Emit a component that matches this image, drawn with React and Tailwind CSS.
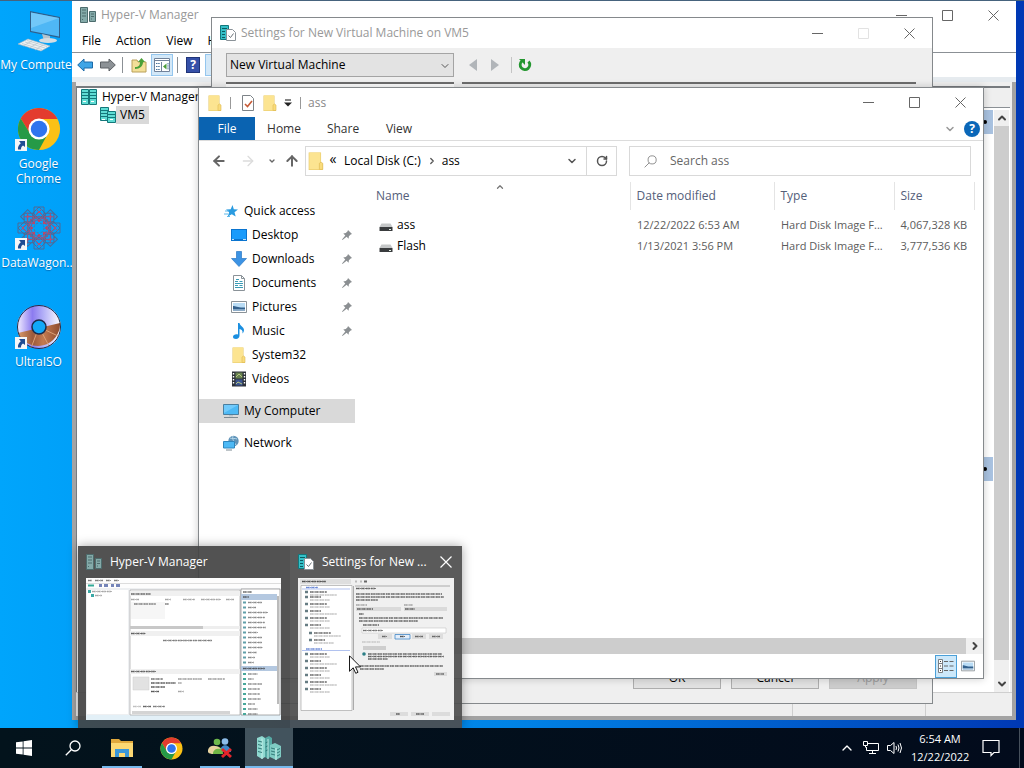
import { ArrowLeft, ArrowRight, ArrowUp, ChevronDown, ChevronRight, ChevronUp, RotateCw } from "lucide-react";

const quickAccess = [
  { label: "Desktop", icon: DesktopIcon, pinned: true },
  { label: "Downloads", icon: DownloadIcon, pinned: true },
  { label: "Documents", icon: DocumentIcon, pinned: true },
  { label: "Pictures", icon: PictureIcon, pinned: true },
  { label: "Music", icon: MusicIcon, pinned: true },
  { label: "System32", icon: FolderIcon },
  { label: "Videos", icon: VideoIcon },
];

const files = [
  { name: "ass", date: "12/22/2022 6:53 AM", type: "Hard Disk Image F...", size: "4,067,328 KB" },
  { name: "Flash", date: "1/13/2021 3:56 PM", type: "Hard Disk Image F...", size: "3,777,536 KB" },
];

/* ---------- Icons ---------- */

function FolderIcon({ className = "w-4 h-4" }) {
  return (
    <svg viewBox="0 0 16 16" className={className}>
      <path d="M1.500 .5h11v9l1.500 1v5.500H1.500z" fill="#e6c766" />
      <path d="M2 .5h10v15H2z" fill="#fce491" />
      <path d="M11 10l1.500-1 1.500 1v5.500h-3z" fill="#f9dc7c" stroke="#dfba53" strokeWidth=".6" />
    </svg>
  );
}

function SearchIcon({ className, strokeWidth = 1 }) {
  return (
    <svg viewBox="0 0 16 16" className={className} fill="none" stroke="currentColor" strokeWidth={strokeWidth}>
      <circle cx="10" cy="6" r="5" />
      <path d="M6.500 9.500L.8 15.200" />
    </svg>
  );
}

function StarIcon() {
  return (
    <svg viewBox="0 0 16 16" className="w-4 h-4">
      <path d="M9.500 2l1.300 4.200 4.200.3-3.500 2.700 1.200 4.300-3.900-2.300-4 2.300 1.300-4.300L3 6.500l4.700-.3z" fill="#2a9be0" />
      <path d="M2 8h4M1 11h4M4 13.500h3" stroke="#5db9ec" strokeWidth="1" />
    </svg>
  );
}

function DesktopIcon() {
  return (
    <svg viewBox="0 0 16 16" className="w-4 h-4">
      <path d="M0 2h16v12H0z" fill="#0a74cf" />
      <path d="M1 3h14v9H1z" fill="#1a9bfb" />
      <path d="M1 12.500h2M12 12.500h3" stroke="#bfe3ff" strokeWidth="1" />
    </svg>
  );
}

function DownloadIcon() {
  return (
    <svg viewBox="0 0 16 16" className="w-4 h-4">
      <path d="M5.500 .5h5v7H15.500L8 15.500.5 7.500h5z" fill="#3c93e4" stroke="#2a77c4" strokeWidth=".7" />
    </svg>
  );
}

function DocumentIcon() {
  return (
    <svg viewBox="0 0 16 16" className="w-4 h-4">
      <path d="M2.500 .5h8l3 3v12h-11z" fill="#fff" stroke="#8a9298" />
      <path d="M10.500 .5v3h3" fill="none" stroke="#8a9298" />
      <path d="M5 4.500h3M4 6.500h3M8.500 6.500h3M4 8.500h8M4 10.500h3M8.500 10.500h3M4 12.500h8" stroke="#3b9bb5" />
    </svg>
  );
}

function PictureIcon({ className = "w-4 h-4" }) {
  return (
    <svg viewBox="0 0 16 16" className={className}>
      <path d="M.5 2.500h15v11H.5z" fill="#fff" stroke="#8a9298" />
      <path d="M2 4h12v8H2z" fill="#b9dcf5" />
      <path d="M2 7c3 0 5 2 12 1.500v2H2z" fill="#33618d" />
      <path d="M2 10.500h12V12H2z" fill="#8fadc8" />
    </svg>
  );
}

function MusicIcon() {
  return (
    <svg viewBox="0 0 16 16" className="w-4 h-4">
      <path d="M7 0h1.500c.5 3 4.500 4 4.500 7 0 2-1 3-1.500 3.500.5-3-1-4-3-4.500v6.500C8.500 14.500 7 16 5 16s-3-1-3-2.300C2 12 4.500 10.800 7 11.500z" fill="#1b8fe0" />
    </svg>
  );
}

function VideoIcon() {
  return (
    <svg viewBox="0 0 16 16" className="w-4 h-4">
      <path d="M1 .5h14v15H1z" fill="#2d3138" />
      <path d="M4.500 1.500h7v6h-7z" fill="#66804f" />
      <path d="M4.500 8.500h7v6h-7z" fill="#3d5590" />
      <path d="M5 6l3-3 3 3M5 13l2-2 4 2" stroke="#b6c67f" fill="none" />
      <path d="M2.500 2v12M13.500 2v12" stroke="#fff" strokeWidth="1.400" strokeDasharray="1.500 1.500" />
    </svg>
  );
}

function ComputerIcon() {
  return (
    <svg viewBox="0 0 16 16" className="w-4 h-4">
      <path d="M.5 1.500h15v10H.5z" fill="#4db9f5" stroke="#4b7f9f" />
      <path d="M1 2h14L1 10z" fill="#8ad6ff" opacity=".6" />
      <path d="M6 12h4v1.500H6z" fill="#b9c4cb" />
      <path d="M1 14.500h14" stroke="#7d8a92" />
    </svg>
  );
}

function NetworkIcon() {
  return (
    <svg viewBox="0 0 16 16" className="w-4 h-4">
      <circle cx="10.500" cy="6" r="5.200" fill="#5f93b8" />
      <path d="M7 3c2 1 5 0 7 1M10 1c-1 3 1 6 3 9" stroke="#b6d8ec" fill="none" />
      <path d="M.5 6.500h11v6.500H.5z" fill="#4db9f5" stroke="#2f86bd" />
      <path d="M3 15h6" stroke="#7d8a92" />
    </svg>
  );
}

function PinIcon() {
  return (
    <svg viewBox="0 0 12 12" className="w-3 h-3">
      <path d="M7 1l4 4-1.300.4L7.900 7.200l-.3 2.500-2-2L1.500 11 1 10.500l3.300-4.100-2-2 2.500-.3L6.600 2.300z" fill="#8b8f92" />
    </svg>
  );
}

function DriveIcon() {
  return (
    <svg viewBox="0 0 14 16" className="w-3.5 h-4">
      <path d="M2.500 6.500h9l2 3.500H.5z" fill="#c5c7c8" />
      <path d="M.5 10h13v4H.5z" fill="#3a3c3e" />
      <path d="M10 12.500h2" stroke="#e7f4ea" />
    </svg>
  );
}

// a tall rack beside a short one
function ServerIcon({ className = "w-4 h-4", muted }) {
  const fill = muted ? "#84aaa9" : "#5fd3cc";
  const line = muted ? "#4d6c6d" : "#14777a";
  return (
    <svg viewBox="0 0 16 16" className={className}>
      <path d="M.5 .5h7v15h-7z" fill={fill} stroke={line} />
      <path d="M2 3h4M2 6h4M2 9h4M2 12.500h1" stroke={line} />
      <path d="M9.500 4.500h6v10h-6z" fill={fill} stroke={line} />
      <path d="M11 7h3M11 9.500h3M11 12h1" stroke={line} />
    </svg>
  );
}

function RackIcon({ paired }) {
  return (
    <svg viewBox="0 0 16 16" className="w-4 h-4">
      <path d={paired ? "M.5 .5h8v13h-8z" : "M.5 .5h7v15h-7z"} fill="#5fdcd4" stroke="#14777a" />
      <path d={paired ? "M7.500 4.500h8v11h-8z" : "M8.500 .5h7v15h-7z"} fill="#5fdcd4" stroke="#14777a" />
      <path d={paired ? "M1 3.500h7M1 6.500h6M8 7.500h7M8 10.500h7M1 9.500h6" : "M1 3.500h14M1 6.500h14M1 9.500h14"} stroke="#14777a" />
      <path d="M2 12.500h3M10 12.500h3" stroke="#fff" />
    </svg>
  );
}

function ServerClusterIcon() {
  return (
    <svg viewBox="0 0 24 24" className="w-6 h-6">
      <path d="M0 2l5-2 3 2v19l-3 2-5-3z" fill="#8fd8d0" />
      <path d="M8 2l4-2 3 2v17l-4 4-3-2z" fill="#55a9a4" />
      <path d="M5 2.500V23M11 3v20" stroke="#c5f0ea" />
      <path d="M13 9l5-2 6 3v11l-5 3-6-3z" fill="#7fcbc3" />
      <path d="M19 12v12" stroke="#d2f5f0" />
      <path d="M1 5l4 1M1 8.500l4 1M1 12l4 1M1 15.500l4 1M14 12l4 1M14 15l4 1M14 18l4 1M20 14l3-1.500M20 17l3-1.500M20 20l3-1.500M8.500 7l2-1M8.500 11l2-1M8.500 15l2-1" stroke="#357c7a" />
    </svg>
  );
}

function ServerSettingsIcon() {
  return (
    <svg viewBox="0 0 16 16" className="w-4 h-4">
      <path d="M.5 .5h8v14h-8z" fill="#35c0c8" stroke="#12787c" />
      <path d="M2 3.500h5M2 6.500h3M2 9.500h3M2 12.500h3" stroke="#0c5c60" />
      <path d="M6.500 4.500h6l3 3v8h-9z" fill="#fff" stroke="#8a9298" />
      <path d="M8.500 10.500l2 2 3-4" fill="none" stroke="#6a7278" />
    </svg>
  );
}

function ChromeIcon({ className }) {
  return (
    <svg viewBox="0 0 48 48" className={className}>
      <circle cx="24" cy="24" r="23" fill="#fbc116" />
      <path d="M4.100 12.500a23 23 0 0 1 39.800 0L44 13H24a11 11 0 0 0-9.500 16.500z" fill="#e33b2e" />
      <path d="M4.100 12.500A23 23 0 0 0 24 47l9.500-17.500A11 11 0 0 1 14.500 29.500z" fill="#269a47" />
      <circle cx="24" cy="24" r="11.500" fill="#fff" />
      <circle cx="24" cy="24" r="9" fill="#2f74ee" />
    </svg>
  );
}

function BigComputerIcon() {
  return (
    <svg viewBox="0 0 44 44" className="w-11 h-11">
      <path d="M13 3l30 6v21l-30-6z" fill="#2e5f8b" />
      <path d="M14 4.500l28 5.500v18.500L14 23z" fill="#4fb7f5" />
      <path d="M14 4.500l28 5.500L14 20z" fill="#8bd4fb" opacity=".6" />
      <path d="M25 26l8 2v4l-6 1z" fill="#b6c3cd" />
      <ellipse cx="31" cy="32.500" rx="9" ry="2.600" fill="#d5dde3" />
      <path d="M1 36l10-5 22 7-9 5z" fill="#eef1f3" stroke="#a9b6c0" strokeWidth=".6" />
      <path d="M5 35.500l20 6M8 34l20 6M10 32.500l20 6M6 38l9-5M12 40l9-5M18 42l8-5" stroke="#b7c4cd" strokeWidth=".7" />
    </svg>
  );
}

function DataWagonIcon() {
  return (
    <svg viewBox="0 0 44 44" className="w-11 h-11" fill="none">
      {[0, 45, 90, 135, 180, 225, 270, 315].map((angle) => (
        <g key={angle} transform={`rotate(${angle} 22 22)`}>
          <path d="M22 1l6 6-6 6-6-6zM17 1h10v10H17z" stroke="#4c6a98" />
          <path d="M22 5l4 5-4 6-4-6zM16 14l6-4 6 4M19 3l6 6M25 3l-6 6" stroke="#94567f" />
          <circle cx="22" cy="14.500" r="1.200" fill="#d1405f" />
          <circle cx="22" cy="6" r="1" fill="#c94a6a" />
        </g>
      ))}
      <circle cx="22" cy="22" r="8" stroke="#a04d70" strokeDasharray="2 1" />
      <circle cx="22" cy="22" r="5" stroke="#5a7099" strokeDasharray="2 2" />
    </svg>
  );
}

function DiscIcon() {
  return (
    <svg viewBox="0 0 44 44" className="w-11 h-11">
      <defs>
        <linearGradient id="discTop">
          <stop offset="0" stopColor="#f4f0ff" />
          <stop offset=".35" stopColor="#8c7bf0" />
          <stop offset=".6" stopColor="#b3b0f7" />
          <stop offset="1" stopColor="#fff" />
        </linearGradient>
        <linearGradient id="discBottom">
          <stop offset="0" stopColor="#d99a6a" />
          <stop offset=".35" stopColor="#9b5a3c" />
          <stop offset=".6" stopColor="#c47a50" />
          <stop offset="1" stopColor="#8e4c30" />
        </linearGradient>
      </defs>
      <circle cx="22" cy="22" r="22" fill="url(#discTop)" />
      <path d="M1 28l42-10a22 22 0 0 1-42 10z" fill="url(#discBottom)" />
      <path d="M22 22L14 43M22 22l10 19M22 22l19 9" stroke="#dba077" />
      <circle cx="22" cy="22" r="21.500" fill="none" stroke="#1d2b4a" />
      <circle cx="22" cy="22" r="7" fill="#12a8f8" stroke="#1d2b4a" strokeWidth="1.500" />
    </svg>
  );
}

function ShortcutArrow() {
  return (
    <svg viewBox="0 0 12 12" className="absolute -left-0.5 bottom-0 w-3 h-3">
      <path d="M0 0h12v12H0z" fill="#f4f6f8" />
      <path d="M4 2h6v6L8 6.500C6 8 6 9 6 10.500H3C2.500 8 4 5.500 5.800 4.200z" fill="#1f4c93" />
    </svg>
  );
}

/* ---------- Shared window chrome ---------- */

function WindowControls({ maxDisabled }) {
  return (
    <div className="ml-auto flex h-full text-[#666]">
      <button aria-label="Minimize" className="w-[46px] flex items-center justify-center">
        <svg viewBox="0 0 11 11" className="w-[11px] h-[11px]"><path d="M0 5.500h11" stroke="currentColor" /></svg>
      </button>
      <button aria-label="Maximize" disabled={maxDisabled} className="w-[46px] flex items-center justify-center disabled:text-[#e2e2e2]">
        <svg viewBox="0 0 11 11" className="w-[11px] h-[11px]"><path d="M.5 .5h10v10H.5z" fill="none" stroke="currentColor" /></svg>
      </button>
      <button aria-label="Close" className="w-[46px] flex items-center justify-center">
        <svg viewBox="0 0 11 11" className="w-[11px] h-[11px]"><path d="M.5 .5l10 10M10.500 .5l-10 10" stroke="currentColor" /></svg>
      </button>
    </div>
  );
}

function DesktopShortcut({ label, icon, shortcut = true }) {
  return (
    <a href="#" className="flex flex-col items-center h-[99px] gap-[5px] text-white text-center leading-[15px]">
      <span className="relative shrink-0">
        {icon}
        {shortcut && <ShortcutArrow />}
      </span>
      <span className="[text-shadow:0_1px_1px_rgba(0,60,120,0.5)]">{label}</span>
    </a>
  );
}

/* ---------- Hyper-V Manager ---------- */

function HyperVWindow() {
  return (
    <section className="absolute left-[72px] right-2 top-px bottom-12 flex flex-col bg-white">
      <header className="flex items-center h-7 pl-2 gap-[5px] text-[#999]">
        <ServerIcon muted />
        <span>Hyper-V Manager</span>
        <WindowControls />
      </header>
      <nav className="flex items-center gap-[15px] h-6 pl-[10px] border-b border-[#8b9095]">
        <button>File</button>
        <button>Action</button>
        <button>View</button>
        <button>Help</button>
      </nav>
      <div className="flex items-center h-6 pl-[5px]">
        <button aria-label="Back" className="w-4 mr-[7px]">
          <svg viewBox="0 0 16 14" className="w-4"><path d="M7 1v3h8.500v6H7v3L.7 7z" fill="#3fa5e6" stroke="#1c6aa8" /></svg>
        </button>
        <button aria-label="Forward" className="w-4 mr-[6px]">
          <svg viewBox="0 0 16 14" className="w-4"><path d="M9 1v3H.5v6H9v3l6.300-6z" fill="#8d9296" stroke="#5c6064" /></svg>
        </button>
        <span className="w-px h-4 bg-[#8b9095] mr-2" />
        <button aria-label="Up one level" className="w-4 mr-1">
          <svg viewBox="0 0 16 16" className="w-4">
            <path d="M1 3h5l1 2h8v10H1z" fill="#f3df98" stroke="#b9a05a" />
            <path d="M4 10c4 0 5-2 5-5H7l3.500-4L14 5h-2c0 4-3 7-8 7z" fill="#49a038" />
          </svg>
        </button>
        <button aria-label="Show tree" className="w-[22px] h-[22px] flex items-center justify-center bg-[#d3e8f8] border border-[#94c6ee] mr-1">
          <svg viewBox="0 0 16 14" className="w-4">
            <path d="M.5 .5h15v13H.5z" fill="#fff" stroke="#71829a" />
            <path d="M1 2.500h14M7.500 4v10" stroke="#71829a" />
            <path d="M2 5.500h4M2 8.500h4M2 11.500h4M14 5v7" stroke="#46729c" strokeDasharray="1.500 .7" />
            <path d="M12.500 5.500v6L9 8.500z" fill="#4a9c38" />
          </svg>
        </button>
        <span className="w-px h-4 bg-[#8b9095] mr-2" />
        <button aria-label="Help" className="w-[14px] h-4 bg-[#3550a8] border border-[#1f3479] text-white font-bold leading-3 mr-[5px]">?</button>
        <button aria-label="Show actions" className="w-[22px] h-[22px] bg-[#d3e8f8] border border-[#94c6ee]" />
      </div>
      <div className="h-[5px] bg-[#e6ebef]" />
      <div className="flex-1 flex min-h-0 bg-[#efefef] border-x-4 border-b-4 border-[#a3a3a3] flex-col">
        <div className="flex-1 flex min-h-0 mt-1 mr-0.5 border-t-2 border-l border-[#777b7f]">
          <div className="flex-1 bg-white">
            <div className="flex items-center gap-[5px] h-[18px] pl-1">
              <RackIcon />
              <span>Hyper-V Manager</span>
            </div>
            <div className="flex items-center h-[18px] pl-[23px]">
              <RackIcon paired />
              <span className="bg-[#d9d9d9] h-[18px] px-1 leading-[17px]">VM5</span>
            </div>
          </div>
          <div className="w-8 flex flex-col bg-white">
            <div className="h-5 bg-[#efefef] border-b border-[#8b9095]" />
            <div className="flex-1 flex min-h-0 pt-[2px]">
              <div className="flex-1 flex flex-col gap-[323px]">
                <span className="h-6 bg-[#a9c2e0] flex items-center"><span className="ml-[5px] w-1 h-1 bg-black rounded-full" /></span>
                <span className="h-6 bg-[#a9c2e0] flex items-center"><span className="ml-[5px] w-1 h-1 bg-black rounded-full" /></span>
              </div>
              <div className="w-[15px] ml-px mr-px flex flex-col items-center bg-[#efefef]">
                <ChevronUp className="w-3 h-4 shrink-0 text-[#444]" strokeWidth={4} />
                <span className="flex-1 w-full bg-[#cdcdcd]" />
                <span className="h-8 flex items-end"><ChevronDown className="w-3 h-4 text-[#444]" strokeWidth={4} /></span>
              </div>
            </div>
          </div>
        </div>
        <footer className="flex h-6 border-t border-[#cfcfcf]">
          <span className="flex-1" />
          <span className="w-[133px] border-l border-[#cfcfcf]" />
          <span className="w-[87px] border-l border-[#cfcfcf]" />
        </footer>
      </div>
    </section>
  );
}

/* ---------- VM settings dialog ---------- */

function SettingsWindow() {
  return (
    <section className="absolute left-[211px] right-[91px] top-[17px] bottom-16 flex flex-col bg-[#efefef] border border-[#85898c]">
      <header className="flex items-center h-[30px] pl-2 gap-[5px] bg-white text-[#999]">
        <ServerSettingsIcon />
        <span>Settings for New Virtual Machine on VM5</span>
        <WindowControls maxDisabled />
      </header>
      <div className="flex items-center h-[34px] pl-[14px]">
        <div className="relative w-[228px]">
          <select aria-label="Virtual machine" className="appearance-none block w-full h-6 pl-[3px] bg-[#e3e3e3] border border-[#a4a4a4] rounded-none">
            <option>New Virtual Machine</option>
          </select>
          <ChevronDown className="absolute right-[3px] top-[7px] w-3 h-3 pointer-events-none text-[#555]" />
        </div>
        <button aria-label="Previous" className="ml-[15px] w-2"><svg viewBox="0 0 8 12" className="w-2"><path d="M8 0v12L0 6z" fill="#b1b5b9" /></svg></button>
        <button aria-label="Next" className="ml-[14px] w-2"><svg viewBox="0 0 8 12" className="w-2"><path d="M0 0v12l8-6z" fill="#b1b5b9" /></svg></button>
        <span className="w-px h-4 bg-[#c4c4c4] ml-3" />
        <button aria-label="Refresh" className="ml-[6px]">
          <svg viewBox="0 0 14 14" className="w-3.5 h-3.5">
            <path d="M10.500 3.500a4.800 4.800 0 1 1-6.500-.5" fill="none" stroke="#23962f" strokeWidth="2.800" />
            <path d="M1 1h6v6z" fill="#23962f" />
          </svg>
        </button>
      </div>
      <div className="flex-1 flex gap-2 px-[14px]">
        <div className="w-[228px] bg-white border-t-2 border-[#6d6d6d]" />
        <div className="flex-1 border-t-2 border-[#6d6d6d] mr-0.5" />
      </div>
      <footer className="flex justify-end gap-[10px] pr-[15px] pb-[14px]">
        <button className="w-[88px] h-[23px] bg-[#e1e1e1] border border-[#adadad]">OK</button>
        <button className="w-[88px] h-[23px] bg-[#e1e1e1] border border-[#adadad]">Cancel</button>
        <button disabled className="w-[88px] h-[23px] bg-[#cccccc] border border-[#c4c4c4] text-[#9a9a9a]">Apply</button>
      </footer>
    </section>
  );
}

/* ---------- File Explorer ---------- */

function NavItem({ label, icon: Icon, pinned, nested, selected }) {
  return (
    <li>
      <a href="#" className={`flex items-center h-6 gap-[5px] pr-[2px] ${nested ? "pl-8" : "pl-6"} ${selected ? "bg-[#d9d9d9]" : ""}`}>
        <Icon />
        <span>{label}</span>
        {pinned && <span className="ml-auto"><PinIcon /></span>}
      </a>
    </li>
  );
}

function ExplorerWindow() {
  return (
    <section className="absolute left-[198px] right-10 top-[87px] bottom-[89px] flex flex-col bg-white border border-[#85898c] shadow-[0_0_8px_rgba(0,0,0,0.2)]">
      <header className="flex items-center h-[29px] pl-2 text-[#888]">
        <FolderIcon />
        <span className="w-px h-3 bg-[#999] ml-[7px] mr-[9px]" />
        <svg viewBox="0 0 16 16" className="w-4 h-4">
          <path d="M2.500 .5h8l3 3v12h-11z" fill="#fff" stroke="#7d8388" />
          <path d="M5 9l2.500 2.500L12 6" fill="none" stroke="#c65b37" strokeWidth="1.600" />
        </svg>
        <FolderIcon className="w-4 h-4 ml-[6px]" />
        <button aria-label="Customize toolbar" className="ml-[6px] w-2">
          <svg viewBox="0 0 8 8" className="w-2"><path d="M1 1h6" stroke="#333" strokeWidth="1.200" /><path d="M0 3.500h8L4 7.500z" fill="#222" /></svg>
        </button>
        <span className="w-px h-3 bg-[#999] ml-2 mr-[7px]" />
        <span>ass</span>
        <WindowControls />
      </header>
      <nav className="flex h-6 items-stretch border-b border-[#dcdcdc] text-[#333]">
        <button className="w-14 bg-[#0a63b1] text-white">File</button>
        <button className="w-[58px]">Home</button>
        <button className="w-[60px]">Share</button>
        <button className="w-[52px]">View</button>
        <span className="ml-auto flex items-center gap-2 pr-[3px]">
          <button aria-label="Expand ribbon"><ChevronDown className="w-3 h-3 text-[#999]" strokeWidth={3} /></button>
          <button aria-label="Help" className="w-4 h-4 rounded-full bg-[#0a67b8] text-white font-bold leading-4">?</button>
        </span>
      </nav>
      <div className="flex items-center h-10 pr-3 text-[#666]">
        <button aria-label="Back" className="ml-3"><ArrowLeft className="w-4 h-4" strokeWidth={3} /></button>
        <button aria-label="Forward" className="ml-[13px] text-[#dcdcdc]"><ArrowRight className="w-4 h-4" /></button>
        <button aria-label="Recent locations" className="ml-3"><ChevronDown className="w-2 h-2" strokeWidth={4} /></button>
        <button aria-label="Up" className="ml-2"><ArrowUp className="w-4 h-4" strokeWidth={3} /></button>
        <div className="flex-1 flex items-center h-[30px] ml-[5px] border border-[#d9d9d9] text-black">
          <FolderIcon className="w-[18px] h-[18px] ml-px" />
          <span className="ml-[2px] w-3 text-[14px] leading-3 pb-1 text-center">«</span>
          <span className="ml-[5px]">Local Disk (C:)</span>
          <ChevronRight className="w-[10px] h-[10px] ml-[6px] text-[#555]" strokeWidth={3} />
          <span className="ml-[5px]">ass</span>
          <button aria-label="Address history" className="ml-auto mr-[8px]"><ChevronDown className="w-3 h-3 text-[#555]" strokeWidth={3} /></button>
          <button aria-label="Refresh" className="w-[30px] h-full flex items-center justify-center border-l border-[#d9d9d9]">
            <RotateCw className="w-3 h-3 text-[#555]" strokeWidth={3} />
          </button>
        </div>
        <label className="flex-1 flex items-center h-[30px] ml-3 pl-[14px] gap-[13px] border border-[#d9d9d9] max-w-[342px] shrink-0 basis-[342px]">
          <SearchIcon className="w-[13px] h-[13px] text-[#777]" />
          <input type="search" placeholder="Search ass" aria-label="Search ass" className="flex-1 min-w-0 outline-none placeholder:text-[#666]" />
        </label>
      </div>
      <div className="flex-1 flex min-h-0">
        <ul className="w-[156px] pt-[18px]">
          <NavItem label="Quick access" icon={StarIcon} />
          {quickAccess.map((item) => (
            <NavItem key={item.label} {...item} nested />
          ))}
          <li className="h-2" />
          <NavItem label="My Computer" icon={ComputerIcon} selected />
          <li className="h-2" />
          <NavItem label="Network" icon={NetworkIcon} />
        </ul>
        <div className="flex-1 flex flex-col pt-px">
          <table className="table-fixed w-full border-collapse text-[#5c5c5c]">
            <colgroup>
              <col />
              <col className="w-36" />
              <col className="w-[120px]" />
              <col className="w-20" />
              <col className="w-[9px]" />
            </colgroup>
            <thead>
              <tr className="h-7 text-left text-[#54607a]">
                <th className="relative font-normal pl-[21px]">
                  Name
                  <ChevronUp className="absolute left-[140px] top-0 w-[10px] h-[10px] text-[#777]" strokeWidth={3} />
                </th>
                <th className="font-normal pl-[6px] border-l border-[#e4e4e4]">Date modified</th>
                <th className="font-normal pl-[6px] border-l border-[#e4e4e4]">Type</th>
                <th className="font-normal pl-[6px] border-l border-[#e4e4e4]">Size</th>
                <th className="border-l border-[#e4e4e4]" />
              </tr>
            </thead>
            <tbody>
              <tr className="h-1" />
              {files.map((file) => (
                <tr key={file.name} className="h-[21px] text-[11px]">
                  <td className="pl-6 text-[12px] text-black">
                    <span className="flex items-center gap-1"><DriveIcon />{file.name}</span>
                  </td>
                  <td className="pl-[7px]">{file.date}</td>
                  <td className="pl-[7px] whitespace-nowrap">{file.type}</td>
                  <td className="pr-[7px] whitespace-nowrap text-right">{file.size}</td>
                  <td />
                </tr>
              ))}
            </tbody>
          </table>
          <div className="mt-auto flex h-4 bg-[#f0f0f0]">
            <span className="flex-1 bg-[#cdcdcd]" />
            <button aria-label="Scroll right" className="w-[17px] flex items-center justify-center">
              <ChevronRight className="w-3 h-3 text-[#444]" strokeWidth={4} />
            </button>
          </div>
        </div>
      </div>
      <footer className="flex items-center justify-end h-6 pr-1">
        <button aria-label="Details view" className="w-[22px] h-[23px] flex items-center justify-center bg-[#cce8fa] border border-[#4ba0d8]">
          <svg viewBox="0 0 16 14" className="w-4 h-3.5" fill="none">
            <path d="M.5 .5h4v13h-4zM.5 4.500h4M.5 9.500h4" fill="#fff" stroke="#7b7f83" />
            <path d="M2 2.500h1M2 7h1M2 11.500h1" stroke="#333" />
            <path d="M6 2.500h10M6 7h10M6 11.500h10" stroke="#666" strokeDasharray="4 1.500" />
          </svg>
        </button>
        <button aria-label="Large icons view" className="w-[22px] h-[22px] flex items-center justify-center">
          <PictureIcon className="w-3.5 h-3.5" />
        </button>
      </footer>
    </section>
  );
}

/* ---------- Taskbar previews ---------- */

// rough line of text, drawn as a dashed stroke
function Line({ x, y, w, color = "#8a8a8a" }) {
  return (
    <g stroke={color} fill="none">
      <path d={`M${x} ${y}h${w}`} strokeWidth="1.800" strokeDasharray=".8 .7 1.300 .6 .6 1" opacity=".45" />
      <path d={`M${x} ${y}h${w}`} strokeWidth=".9" strokeDasharray="3 .6 1.600 .5 2.300 .8" opacity=".7" />
    </g>
  );
}

function HyperVPreview() {
  const widths = [14, 8, 20, 17, 17, 18, 10, 14, 14, 15, 9, 7, 6];
  return (
    <svg viewBox="0 0 195 142" className="w-[195px] h-[142px]">
      <path d="M0 0h195v142H0z" fill="#fdfdfd" />
      <Line x={2} y={2.5} w={4} color="#555" /><Line x={9} y={2.5} w={8} color="#555" /><Line x={20} y={2.5} w={5} color="#555" /><Line x={28} y={2.5} w={5} color="#555" />
      <path d="M0 5.500h195" stroke="#ddd" />
      <path d="M2 7.500h6" stroke="#3a9" strokeWidth="2" />
      <path d="M13 7.500h3M18 7.500h4M25 7.500h3M30 7.500h4" stroke="#7484b8" strokeWidth="3" />
      <path d="M0 10h195v132H0z" fill="#eef0f2" />
      <path d="M1 12h41v124H1z" fill="#fff" />
      <path d="M0 137h195v5H0z" fill="#e3f0f7" />
      <path d="M2 12h3v3H2zM5 16h3v3H5z" fill="#3aa8a5" />
      <Line x={6} y={13.5} w={20} /><Line x={9} y={17.500} w={7} />
      <path d="M44 12h110v125H44z" fill="#fff" stroke="#999" strokeWidth=".6" />
      <path d="M44 13h110v5H44zM44 53h110v5H44zM44 91h110v5H44z" fill="#f0f0f0" />
      <Line x={45} y={16} w={20} color="#333" /><Line x={45} y={55.500} w={15} color="#333" /><Line x={45} y={93.500} w={25} color="#333" />
      <Line x={45} y={21.500} w={8} /><Line x={79} y={21.500} w={6} /><Line x={97} y={21.500} w={12} /><Line x={115} y={21.500} w={20} /><Line x={140} y={21.500} w={8} />
      <path d="M45 24h34v17H45z" fill="#f6f6f6" />
      <Line x={48} y={26} w={22} color="#555" /><Line x={79} y={26} w={4} color="#555" />
      <path d="M44 48h110v3H44z" fill="#eee" /><path d="M44 48h73v3H44z" fill="#c8c8c8" />
      <Line x={77} y={62.500} w={49} color="#555" />
      <path d="M47 99h16v13H47z" fill="#e2e2e2" stroke="#ccc" strokeWidth=".5" />
      <Line x={65} y={101} w={12} color="#444" /><Line x={92} y={101} w={24} color="#777" /><Line x={122} y={101} w={17} color="#777" />
      <Line x={65} y={105} w={25} color="#222" /><Line x={92} y={105} w={4} />
      <Line x={65} y={109} w={14} color="#222" /><Line x={65} y={113.500} w={8} color="#222" /><Line x={92} y={113.500} w={6} />
      <Line x={47} y={128.500} w={8} color="#aaa" /><Line x={57} y={128.500} w={8} color="#333" /><Line x={67} y={128.500} w={12} color="#555" />
      <path d="M46 133h98v3H46z" fill="#d4d4d4" />
      <path d="M155 11h39v126h-39z" fill="#fff" stroke="#777" strokeWidth=".6" />
      <path d="M155 16h36v6h-36zM155 88h36v5h-36z" fill="#b4c8e0" />
      <path d="M192 18v108" stroke="#bbb" strokeWidth="2" />
      <Line x={157} y={14} w={9} color="#333" /><Line x={157} y={19} w={6} color="#333" /><Line x={157} y={90.500} w={22} color="#333" />
      {widths.map((w, i) => (
        <g key={i}>
          <path d={`M157 ${24.500 + i * 5}h3`} stroke="#5f9ea8" strokeWidth="2" />
          <Line x={162} y={24.5 + i * 5} w={w} color="#666" />
        </g>
      ))}
      {widths.slice(0, 9).map((w, i) => (
        <g key={i}>
          <path d={`M157 ${96 + i * 5}h3`} stroke="#48a79b" strokeWidth="2" />
          <Line x={162} y={96 + i * 5} w={w * 0.7} color="#666" />
        </g>
      ))}
    </svg>
  );
}

function SettingsPreview() {
  const tree = [14, 19, 26, 33, 40, 47, 55, 62];
  const lower = [76, 83, 90, 97, 104, 111];
  return (
    <svg viewBox="0 0 156 142" className="w-[156px] h-[142px]">
      <path d="M0 0h156v142H0z" fill="#f0f0f0" />
      <path d="M2 1h51v5H2z" fill="#dedede" />
      <Line x={4} y={3.5} w={24} color="#222" />
      <path d="M57 3.500h2M62 3.500h2" stroke="#bbb" strokeWidth="2" /><path d="M66 3.500h3" stroke="#666" strokeWidth="2" />
      <path d="M3 7.500h51v125H3z" fill="#fff" stroke="#9a9a9a" strokeWidth=".6" />
      <Line x={8} y={9.500} w={12} color="#3a62c8" /><path d="M4 11h48M4 72.500h48" stroke="#8fa8e8" strokeWidth=".7" />
      <Line x={8} y={71} w={16} color="#3a62c8" />
      {[...tree, ...lower].map((y, i) => (
        <g key={y}>
          <path d={`M${i > 5 && i < 8 ? 11 : 7} ${y}h3`} stroke="#667c83" strokeWidth="2.500" />
          <Line x={i > 5 && i < 8 ? 16 : 12} y={y} w={i % 2 ? 11 : 17} color="#333" />
          <Line x={i > 5 && i < 8 ? 16 : 12} y={y + 3} w={i % 3 ? 20 : 27} color="#aaa" />
        </g>
      ))}
      <path d="M55.500 8v124M57 8h95" stroke="#999" strokeWidth=".8" />
      <Line x={58} y={10.500} w={20} color="#333" />
      <Line x={58} y={16} w={86} color="#333" /><Line x={58} y={19} w={88} color="#333" /><Line x={58} y={22} w={22} color="#333" />
      <Line x={58} y={27} w={11} /><Line x={106} y={27} w={9} />
      <path d="M58 29h45v4H58zM106 29h43v4h-43z" fill="#dadada" /><Line x={59} y={31} w={16} color="#333" /><Line x={107} y={31} w={10} color="#333" />
      <Line x={61} y={36} w={5} color="#333" />
      <Line x={61} y={40} w={84} color="#333" /><Line x={61} y={43} w={59} color="#333" />
      <Line x={65} y={47} w={16} color="#333" />
      <path d="M64 50h84v5H64z" fill="#fff" stroke="#bbb" strokeWidth=".5" /><Line x={65} y={52.500} w={20} color="#444" />
      <path d="M80 56h14v5H80zM114 56h14v5h-14zM131 56h14v5h-14z" fill="#ddd" /><path d="M97 56.500h15v4.500H97z" fill="#e4eefa" stroke="#4388c8" strokeWidth=".8" />
      <Line x={84} y={58.500} w={5} color="#444" /><Line x={102} y={58.500} w={5} color="#222" /><Line x={117} y={58.500} w={8} color="#444" /><Line x={134} y={58.500} w={8} color="#444" />
      <Line x={64} y={64} w={18} color="#bbb" /><path d="M65 68h23v4H65z" fill="#cecece" />
      <circle cx="66" cy="76" r="1.800" fill="#2c7f86" />
      <Line x={70} y={76} w={74} color="#333" /><Line x={70} y={78.500} w={76} color="#333" /><Line x={70} y={81} w={20} color="#333" />
      <Line x={62} y={88} w={83} color="#333" /><Line x={62} y={91} w={24} color="#333" />
      <path d="M136 94h13v4h-13zM92 134h18v4H92zM113 134h18v4h-18zM134 134h18v4h-18z" fill="#dcdcdc" />
      <Line x={138} y={96} w={8} color="#444" /><Line x={98} y={136} w={4} color="#333" /><Line x={118} y={136} w={8} color="#333" />
    </svg>
  );
}

function TaskPreviews() {
  return (
    <div className="absolute left-[78px] bottom-10 flex text-white bg-[#434343]/92 shadow-[0_0_10px_rgba(0,0,0,0.35)]">
      <a href="#" className="pl-2 pr-[9px] pb-2">
        <span className="flex items-center h-8 gap-2"><ServerIcon muted /><span>Hyper-V Manager</span></span>
        <HyperVPreview />
      </a>
      <div className="px-2 pb-2 bg-white/5">
        <div className="flex items-center h-8 gap-2">
          <ServerSettingsIcon />
          <a href="#">Settings for New ...</a>
          <button aria-label="Close preview" className="ml-auto mr-[2px]">
            <svg viewBox="0 0 12 12" className="w-3 h-3"><path d="M.5 .5l11 11M11.500 .5l-11 11" stroke="#fff" strokeWidth="1.200" /></svg>
          </button>
        </div>
        <SettingsPreview />
      </div>
    </div>
  );
}

/* ---------- Taskbar ---------- */

function TaskButton({ label, children, running, active }) {
  return (
    <button aria-label={label} className={`relative w-12 h-full flex items-center justify-center ${active ? "bg-[#42535d]" : ""}`}>
      {children}
      {running && <span className={`absolute bottom-0 h-0.5 bg-[#76b9ed] ${active ? "inset-x-0" : "inset-x-1"}`} />}
    </button>
  );
}

function Taskbar() {
  return (
    <footer className="absolute inset-x-0 bottom-0 h-10 flex bg-linear-to-r from-[#03131c] to-[#020b1c] text-white">
      <div className="flex gap-px">
        <TaskButton label="Start">
          <svg viewBox="0 0 16 16" className="w-4 h-4"><path d="M0 2.300l6.700-.9v6.200H0zM7.500 1.200L16 0v7.600H7.500zM0 8.400h6.700v6.200L0 13.700zM7.500 8.400H16V16l-8.500-1.200z" fill="#fff" /></svg>
        </TaskButton>
        <TaskButton label="Search"><SearchIcon className="w-4 h-4" strokeWidth={1.3} /></TaskButton>
        <TaskButton label="File Explorer" running>
          <svg viewBox="0 0 22 20" className="w-[22px] h-5">
            <path d="M0 1h8l2 2h12v16H0z" fill="#e0a83c" />
            <path d="M0 5h22v14H0z" fill="#fcd873" />
            <path d="M4 19v-8h14v8h-4v-4H8v4z" fill="#3b97d8" />
          </svg>
        </TaskButton>
        <TaskButton label="Google Chrome"><ChromeIcon className="w-[23px] h-[23px]" /></TaskButton>
        <TaskButton label="Users" running>
          <svg viewBox="0 0 24 22" className="w-6 h-[22px]">
            <circle cx="9" cy="5" r="3.300" fill="#6db84c" />
            <circle cx="17" cy="4.500" r="3.300" fill="#8dbdea" />
            <path d="M12 15c0-9 10-9 11 0z" fill="#4187c8" />
            <path d="M3 17c0-10 12-10 12 0z" fill="#70b545" />
            <path d="M0 13c1-5 8-6 13-1-5-1-8 1-8 5-3 0-6-1-5-4z" fill="#e8d3a0" />
            <path d="M14 12l9 8M23 12l-9 8" stroke="#e5262b" strokeWidth="3" />
          </svg>
        </TaskButton>
        <TaskButton label="Hyper-V Manager" running active><ServerClusterIcon /></TaskButton>
      </div>
      <div className="ml-auto flex items-center">
        <button aria-label="Show hidden icons" className="mr-2"><ChevronUp className="w-4 h-4" strokeWidth={2} /></button>
        <button aria-label="Network" className="mr-2">
          <svg viewBox="0 0 16 14" className="w-4 h-3.5" fill="none" stroke="#fff">
            <path d="M5 2.500h10.500v7H3.500V6M9.500 9.500v3M6 12.500h7M.5 .5h4v4h-4zM2.500 4.500v2" />
          </svg>
        </button>
        <button aria-label="Volume" className="mr-2">
          <svg viewBox="0 0 16 14" className="w-4 h-3.5" fill="none" stroke="#fff">
            <path d="M.5 4.500h3l3.500-3v11l-3.500-3h-3zM9 5q1 2 0 4M11 3.500q2 3.500 0 7M13 2q3 5 0 10" />
          </svg>
        </button>
        <span className="w-[58px] text-center text-[11px] leading-[18px]">6:54 AM<br />12/22/2022</span>
        <button aria-label="Notifications" className="ml-[13px] mr-[19px]">
          <svg viewBox="0 0 18 18" className="w-[18px] h-[18px]" fill="none" stroke="#fff" strokeWidth="1.200">
            <path d="M1 1.500h16v12h-5l-3 3v-3H1z" />
          </svg>
        </button>
        <span className="w-px h-full bg-[#46505c] mr-1" />
      </div>
    </footer>
  );
}

export default function App() {
  return (
    <div className="relative h-screen w-full overflow-hidden bg-linear-to-r from-[#00a5fc] via-[#0083e6] to-[#0038b4] shadow-[inset_0_1px_0_#46637d] font-['Open_Sans','Noto_Sans',sans-serif] text-[12px] leading-4 text-black">
      <nav className="w-[77px] pt-2">
        <DesktopShortcut label={<span className="whitespace-nowrap">My Computer</span>} icon={<BigComputerIcon />} shortcut={false} />
        <DesktopShortcut label="Google Chrome" icon={<ChromeIcon className="w-11 h-11" />} />
        <DesktopShortcut label="DataWagon..." icon={<DataWagonIcon />} />
        <DesktopShortcut label="UltraISO" icon={<DiscIcon />} />
      </nav>
      <HyperVWindow />
      <SettingsWindow />
      <ExplorerWindow />
      <TaskPreviews />
      <Taskbar />
      <svg viewBox="0 0 12 19" className="absolute left-[349px] bottom-[94px] w-3 h-[19px]">
        <path d="M.5 .8v15.500l3.700-3.500 2.500 5.500 2.300-1-2.500-5.400h5z" fill="#fff" stroke="#000" strokeWidth=".9" />
      </svg>
    </div>
  );
}
